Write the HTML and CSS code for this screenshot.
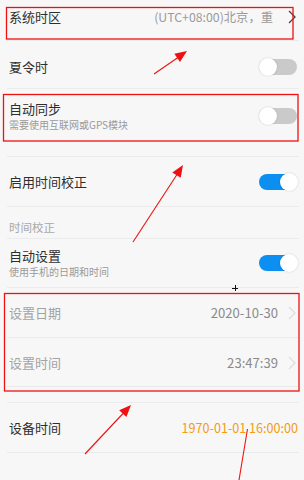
FILE: index.html
```html
<!DOCTYPE html>
<html lang="zh-CN">
<head>
<meta charset="utf-8">
<link rel="stylesheet" href="styles.css">
</head>
<body>
<div class="screen">
  <div class="list">
    <div class="row row-a">
      <span class="title">系统时区</span>
      <span class="value tz">(UTC+08:00)北京，重</span>
      <svg class="chev dark" viewBox="0 0 8 14" width="8" height="14"><path d="M1 1 L7 7 L1 13" fill="none" stroke="#444" stroke-width="1.3"/></svg>
    </div>
    <div class="row row-b">
      <span class="title">夏令时</span>
      <span class="switch off"></span>
    </div>
    <div class="row row-c">
      <div class="texts">
        <span class="title">自动同步</span>
        <span class="sub">需要使用互联网或GPS模块</span>
      </div>
      <span class="switch off"></span>
    </div>
    <div class="row row-d">
      <span class="title">启用时间校正</span>
      <span class="switch on"></span>
    </div>
    <div class="row section">
      <span class="section-title">时间校正</span>
    </div>
    <div class="row row-f">
      <div class="texts">
        <span class="title">自动设置</span>
        <span class="sub">使用手机的日期和时间</span>
      </div>
      <span class="switch on"></span>
    </div>
    <div class="row row-g">
      <span class="title disabled">设置日期</span>
      <span class="value date">2020-10-30</span>
      <svg class="chev" viewBox="0 0 8 14" width="8" height="14"><path d="M1 1 L7 7 L1 13" fill="none" stroke="#dcdcdc" stroke-width="1.2"/></svg>
    </div>
    <div class="row row-h">
      <span class="title disabled">设置时间</span>
      <span class="value date">23:47:39</span>
      <svg class="chev" viewBox="0 0 8 14" width="8" height="14"><path d="M1 1 L7 7 L1 13" fill="none" stroke="#dcdcdc" stroke-width="1.2"/></svg>
    </div>
    <div class="row gap"></div>
    <div class="row row-i">
      <span class="title">设备时间</span>
      <span class="value device">1970-01-01 16:00:00</span>
    </div>
  </div>

  <svg class="annot" viewBox="0 0 304 480" width="304" height="480">
    <g fill="none" stroke="#ee1111" stroke-width="1.3">
      <rect x="6.5" y="7.5" width="286.5" height="31.5"/>
      <rect x="3.5" y="94.5" width="294.5" height="46.5"/>
      <rect x="4.5" y="293.5" width="294.5" height="97.5"/>
    </g>
    <g stroke="#ee1111" stroke-width="1.1">
      <line x1="154" y1="74" x2="178" y2="57.5"/>
      <line x1="133" y1="242" x2="177" y2="174.5"/>
      <line x1="85" y1="454" x2="123" y2="413.5"/>
      <line x1="247.5" y1="429" x2="239" y2="480"/>
    </g>
    <g fill="#ee1111">
      <polygon points="187,51 180,62 174.3,53.8"/>
      <polygon points="183,165 180.7,177.8 172.3,172.4"/>
      <polygon points="131,405 126.4,417.1 119.2,410.3"/>
    </g>
    <g stroke="#111" stroke-width="1">
      <line x1="232" y1="288.5" x2="238" y2="288.5"/>
      <line x1="235.5" y1="285" x2="235.5" y2="291"/>
    </g>
  </svg>
</div>
</body>
</html>
```

FILE: styles.css
```css
html, body {
  margin: 0;
  padding: 0;
}
body {
  background: #f7f7f7;
  font-family: "Noto Sans CJK SC", "Noto Sans", sans-serif;
  width: 304px;
  height: 480px;
  overflow: hidden;
}
.screen {
  position: relative;
  width: 304px;
  height: 480px;
}
.list {
  padding: 0 5px 0 7px;
}
.row {
  display: flex;
  align-items: center;
  box-sizing: border-box;
  padding: 0 3px 0 2px;
  border-bottom: 1px solid #ebebeb;
}
.title {
  font-size: 13px;
  line-height: 18px;
  color: #2e2e2e;
  flex: 0 0 auto;
}
.title.disabled {
  color: #a3a3a3;
}
.texts {
  display: flex;
  flex-direction: column;
  flex: 1 1 auto;
}
.sub {
  font-size: 10px;
  line-height: 14px;
  color: #9a9a9a;
}
.value {
  margin-left: auto;
  font-size: 12px;
  line-height: 18px;
  white-space: nowrap;
}
.tz {
  color: #9a9a9a;
  font-size: 12.3px;
}
.date {
  color: #8a8a8a;
  font-size: 13.1px;
}
.device {
  color: #f29b14;
  font-size: 12.6px;
  margin-right: -2px;
}
.chev {
  flex: 0 0 auto;
  margin-left: 10px;
  display: block;
}
.row-a {
  height: 41px;
  align-items: flex-start;
  padding-top: 8px;
}
.row-a .chev {
  margin-top: 2px;
  margin-left: 15px;
}
.row-b {
  height: 48px;
  padding-top: 4px;
}
.row-c {
  height: 68px;
  padding-bottom: 13px;
}
.row-d {
  height: 50px;
}
.section {
  height: 32px;
  align-items: flex-end;
  padding-bottom: 3px;
}
.section-title {
  font-size: 11.5px;
  line-height: 16px;
  color: #a8a8a8;
}
.row-f {
  height: 49px;
}
.row-g {
  height: 50px;
  padding-top: 1px;
}
.row-h {
  height: 49px;
  padding-top: 1px;
}
.gap {
  height: 16px;
}
.row-i {
  height: 50px;
}
.switch {
  position: relative;
  margin-left: auto;
  flex: 0 0 auto;
  width: 38px;
  height: 16px;
  border-radius: 8px;
  margin-right: -1px;
}
.switch.off {
  background: #cacaca;
}
.switch.on {
  background: #0d8ff2;
}
.switch::after {
  content: "";
  position: absolute;
  top: -1px;
  width: 18px;
  height: 18px;
  border-radius: 50%;
  background: #fff;
  box-shadow: 0 0 2px rgba(0, 0, 0, 0.18);
}
.switch.off::after {
  left: 0;
}
.switch.on::after {
  right: -1px;
}
.annot {
  position: absolute;
  left: 0;
  top: 0;
  pointer-events: none;
}
```
